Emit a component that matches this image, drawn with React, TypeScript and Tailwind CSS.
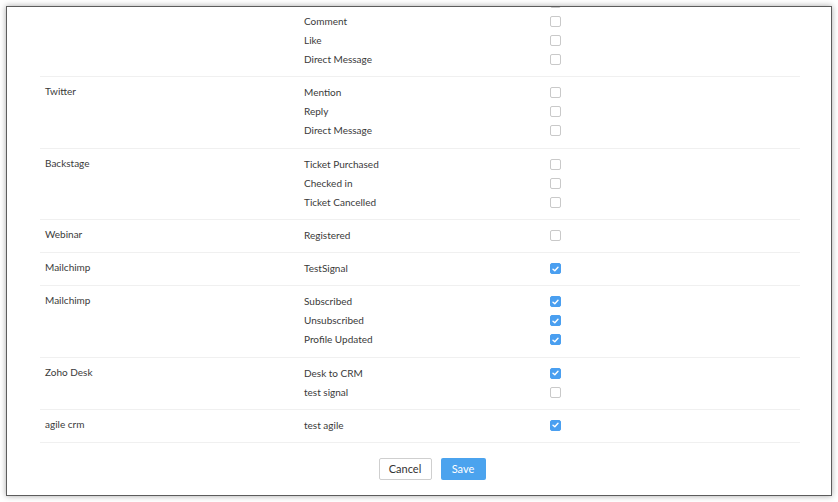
import React, { useState } from "react";

type Group = {
  name: string;
  events: { label: string; checked: boolean }[];
};

// first group is scrolled mostly out of view
const groups: Group[] = [
  {
    name: "",
    events: [
      { label: "", checked: false },
      { label: "Comment", checked: false },
      { label: "Like", checked: false },
      { label: "Direct Message", checked: false },
    ],
  },
  {
    name: "Twitter",
    events: [
      { label: "Mention", checked: false },
      { label: "Reply", checked: false },
      { label: "Direct Message", checked: false },
    ],
  },
  {
    name: "Backstage",
    events: [
      { label: "Ticket Purchased", checked: false },
      { label: "Checked in", checked: false },
      { label: "Ticket Cancelled", checked: false },
    ],
  },
  { name: "Webinar", events: [{ label: "Registered", checked: false }] },
  { name: "Mailchimp", events: [{ label: "TestSignal", checked: true }] },
  {
    name: "Mailchimp",
    events: [
      { label: "Subscribed", checked: true },
      { label: "Unsubscribed", checked: true },
      { label: "Profile Updated", checked: true },
    ],
  },
  {
    name: "Zoho Desk",
    events: [
      { label: "Desk to CRM", checked: true },
      { label: "test signal", checked: false },
    ],
  },
  { name: "agile crm", events: [{ label: "test agile", checked: true }] },
];

function Checkbox({ checked, onToggle }: { checked: boolean; onToggle: () => void }) {
  return (
    <button
      onClick={onToggle}
      className={`flex h-[11px] w-[11px] items-center justify-center rounded-[2px] border ${
        checked ? "border-[#4a9ff0] bg-[#4a9ff0]" : "border-[#c9c9c9] bg-white"
      }`}
    >
      {checked && (
        <svg width="7" height="6" viewBox="0 0 7 6" fill="none">
          <path d="M1 3.2 2.8 4.8 6 1.2" stroke="white" strokeWidth="1.4" strokeLinecap="round" strokeLinejoin="round" />
        </svg>
      )}
    </button>
  );
}

export default function App() {
  const [state, setState] = useState(groups.map((g) => g.events.map((e) => e.checked)));

  const toggle = (gi: number, ei: number) =>
    setState((s) => s.map((row, i) => (i === gi ? row.map((v, j) => (j === ei ? !v : v)) : row)));

  return (
    <div className="h-[502px] w-[838px] bg-white p-[6px] font-['Lato','Liberation_Sans',sans-serif] text-[10px] text-[#3a3a3a]">
      <div className="h-full w-full overflow-hidden border border-[#5c5c5c] bg-white shadow-[0_0_6px_rgba(0,0,0,0.35)]">
        <div className="ml-[33px] mt-[-20px] w-[760px]">
          {groups.map((g, gi) => (
            <div key={gi} className="flex border-b border-[#f0f0f0] pb-[7.25px] pt-[6px]">
              <div className="w-[264px] pl-[5px] leading-[16px]">{g.name}</div>
              <div className="flex flex-col">
                {g.events.map((e, ei) => (
                  <div key={ei} className="flex h-[19px] items-center">
                    <div className="w-[246px]">{e.label}</div>
                    <Checkbox checked={state[gi][ei]} onToggle={() => toggle(gi, ei)} />
                  </div>
                ))}
              </div>
            </div>
          ))}
        </div>
        <div className="mt-[15px] flex justify-center gap-[9px] pl-[26px] text-[11px]">
          <button className="h-[22px] w-[53px] rounded-[2px] border border-[#cfcfcf] bg-white text-[#333]">
            Cancel
          </button>
          <button className="h-[22px] w-[45px] rounded-[2px] bg-[#4ba3ee] text-white">Save</button>
        </div>
      </div>
    </div>
  );
}
